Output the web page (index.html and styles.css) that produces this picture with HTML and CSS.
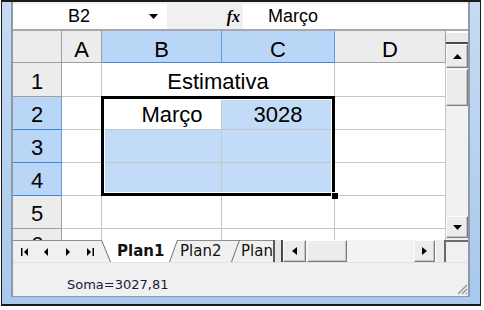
FILE: index.html
```html
<!DOCTYPE html>
<html lang="pt">

<head>
    <meta charset="UTF-8">
    <title>Planilha - Estimativa</title>
    <link rel="stylesheet" href="styles.css">
</head>

<body>
    <div class="window">
        <div class="inner">
            <!-- Formula bar -->
            <div class="formula-bar">
                <div class="name-box">
                    <span class="name-text">B2</span>
                    <svg class="drop" width="9" height="5" viewBox="0 0 9 5"><path d="M0 0H9L4.5 5Z" /></svg>
                </div>
                <div class="fx-area"><span class="fx">fx</span></div>
                <div class="formula-input">Março</div>
            </div>

            <!-- Sheet + vertical scrollbar -->
            <div class="sheet-area">
                <div class="sheet">
                    <div class="grid">
                        <div class="hdr corner"></div>
                        <div class="hdr col">A</div>
                        <div class="hdr col sel">B</div>
                        <div class="hdr col sel">C</div>
                        <div class="hdr col">D</div>

                        <div class="hdr row">1</div>
                        <div class="cell"></div>
                        <div class="cell merged">Estimativa</div>
                        <div class="cell"></div>

                        <div class="hdr row sel">2</div>
                        <div class="cell"></div>
                        <div class="cell active">Março</div>
                        <div class="cell sel">3028</div>
                        <div class="cell"></div>

                        <div class="hdr row sel">3</div>
                        <div class="cell"></div>
                        <div class="cell sel"></div>
                        <div class="cell sel"></div>
                        <div class="cell"></div>

                        <div class="hdr row sel">4</div>
                        <div class="cell"></div>
                        <div class="cell sel"></div>
                        <div class="cell sel"></div>
                        <div class="cell"></div>

                        <div class="hdr row">5</div>
                        <div class="cell"></div>
                        <div class="cell"></div>
                        <div class="cell"></div>
                        <div class="cell"></div>

                        <div class="hdr row part">6</div>
                        <div class="cell part"></div>
                        <div class="cell part"></div>
                        <div class="cell part"></div>
                        <div class="cell part"></div>
                    </div>
                    <div class="selection"><span class="fill-handle"></span></div>
                </div>

                <div class="vscroll">
                    <div class="vs-split"></div>
                    <div class="btn vs-up">
                        <svg width="9" height="5" viewBox="0 0 9 5"><path d="M0 5H9L4.5 0Z" /></svg>
                    </div>
                    <div class="btn vs-thumb"></div>
                    <div class="vs-track"></div>
                    <div class="btn vs-down">
                        <svg width="9" height="5" viewBox="0 0 9 5"><path d="M0 0H9L4.5 5Z" /></svg>
                    </div>
                </div>
            </div>

            <!-- Sheet tabs + horizontal scrollbar -->
            <div class="tab-bar">
                <div class="tab-nav">
                    <span class="nav-btn">
                        <svg width="7" height="8" viewBox="0 0 7 8"><path d="M0 0H1.5V8H0Z M7 0V8L3 4Z" /></svg>
                    </span>
                    <span class="nav-btn">
                        <svg width="4" height="8" viewBox="0 0 4 8"><path d="M4 0V8L0 4Z" /></svg>
                    </span>
                    <span class="nav-btn">
                        <svg width="4" height="8" viewBox="0 0 4 8"><path d="M0 0V8L4 4Z" /></svg>
                    </span>
                    <span class="nav-btn">
                        <svg width="7" height="8" viewBox="0 0 7 8"><path d="M0 0V8L4 4Z M5.5 0H7V8H5.5Z" /></svg>
                    </span>
                </div>
                <svg class="slant" width="10" height="22" viewBox="0 0 10 22">
                    <path d="M0 0H10V22Z" fill="#fff" />
                    <path d="M0.5 0L9.5 22" stroke="#6f6f6f" fill="none" />
                </svg>
                <div class="tab active">Plan1</div>
                <svg class="slant" width="9" height="22" viewBox="0 0 9 22">
                    <path d="M0 0H9L0 22Z" fill="#fff" />
                    <path d="M8.5 0L0.5 22" stroke="#6f6f6f" fill="none" />
                </svg>
                <div class="tab">Plan2</div>
                <svg class="slant" width="9" height="22" viewBox="0 0 9 22">
                    <path d="M0 0.5H9" stroke="#8e8e8e" fill="none" />
                    <path d="M8.5 0L0.5 22" stroke="#6f6f6f" fill="none" />
                </svg>
                <div class="tab last">Plan</div>
                <div class="tab-split"></div>
                <div class="btn hs-left">
                    <svg width="5" height="8" viewBox="0 0 5 8"><path d="M5 0V8L0 4Z" /></svg>
                </div>
                <div class="btn hs-thumb"></div>
                <div class="hs-track"></div>
                <div class="btn hs-right">
                    <svg width="5" height="8" viewBox="0 0 5 8"><path d="M0 0V8L5 4Z" /></svg>
                </div>
                <div class="hs-split"></div>
                <div class="corner-box"></div>
            </div>

            <!-- Status bar -->
            <div class="status-bar">
                <span class="status-text">Soma=3027,81</span>
                <svg class="grip" width="13" height="13" viewBox="0 0 13 13">
                    <path d="M12 3L3 12 M12 7L7 12 M12 11L11 12" stroke="#9a9a9a" stroke-width="1.5" fill="none" />
                </svg>
            </div>
        </div>
    </div>
</body>

</html>
```

FILE: styles.css
```css
* {
    box-sizing: border-box;
}

body {
    margin: 0;
    background: #fff;
    font-family: "Liberation Sans", Arial, sans-serif;
}

.window {
    width: 480px;
    height: 306px;
    margin-left: 1px;
    border: 1px solid #1a1a1a;
    border-top-width: 2px;
    border-bottom-width: 2px;
    background: linear-gradient(#c6dbf1, #a9c8ec);
    padding: 0 10px 7px 9px;
}

.inner {
    height: 100%;
    border: 2px solid #8a99ab;
    border-top: 0;
    border-bottom-width: 1px;
    background: #f0f0f0;
    display: flex;
    flex-direction: column;
}

/* formula bar */
.formula-bar {
    display: flex;
    height: 29px;
    padding-top: 2px;
    border-bottom: 2px solid #a8a8a8;
    background: #f0f0f0;
    font-size: 18px;
    line-height: 25px;
    color: #000;
}

.name-box {
    width: 154px;
    background: #fff;
    display: flex;
    align-items: center;
}

.name-text {
    width: 132px;
    text-align: center;
}

.drop {
    margin-left: 4px;
}

.fx-area {
    width: 76px;
    display: flex;
    justify-content: flex-end;
    padding-right: 3px;
}

.fx {
    font-family: "Liberation Serif", serif;
    font-style: italic;
    font-weight: bold;
    font-size: 16px;
}

.formula-input {
    flex: 1;
    background: #fff;
    padding-left: 25px;
}

/* sheet */
.sheet-area {
    display: flex;
    height: 209px;
}

.sheet {
    position: relative;
    width: 433px;
    background: #fff;
    overflow: hidden;
}

.grid {
    display: grid;
    grid-template-columns: 49px 40px 120px 113px 111px;
    grid-template-rows: 32px 34px 33px 33px 33px 33px 11px;
    font-size: 22px;
    line-height: 25px;
    color: #000;
}

.hdr,
.cell {
    display: flex;
    align-items: flex-end;
    justify-content: center;
    border-right: 1px solid #c6c6c6;
    border-bottom: 1px solid #c6c6c6;
    padding-bottom: 2px;
}

.hdr {
    background: #ececec;
    border-color: #9f9f9f;
}

.hdr.col {
    padding-bottom: 0;
}

.hdr.sel {
    background: #bad6f6;
    border-right-color: #5f9de6;
    border-bottom-color: #3a88e0;
}

.cell.merged {
    grid-column: span 2;
}

.cell.sel {
    background: #c2dbf6;
}

.cell.active {
    padding-left: 21px;
}

.part {
    align-items: flex-start;
    padding: 3px 0 0;
    border-bottom: 0;
    overflow: hidden;
}

.selection {
    position: absolute;
    left: 88px;
    top: 65px;
    width: 234px;
    height: 100px;
    border: 3px solid #000;
    box-shadow: inset 0 0 0 1px #fff;
}

.fill-handle {
    position: absolute;
    right: -6px;
    bottom: -6px;
    width: 7px;
    height: 7px;
    background: #000;
    border: 1px solid #fff;
    border-width: 1px 0 0 1px;
}

/* buttons */
.btn {
    display: flex;
    align-items: center;
    justify-content: center;
    background: #ececec;
    border: 1px solid;
    border-color: #fdfdfd #7c7c7c #7c7c7c #fdfdfd;
    box-shadow: inset -1px -1px 0 #c4c4c4;
}

/* vertical scrollbar */
.vscroll {
    width: 22px;
    display: flex;
    flex-direction: column;
    background: #f1f1f1;
    padding-bottom: 2px;
}

.vs-split {
    height: 13px;
    border-top: 2px solid #fff;
    border-bottom: 2px solid #4a4a4a;
    background: #e9e9e9;
}

.vs-up {
    height: 24px;
}

.vs-thumb {
    height: 37px;
    margin-top: 1px;
}

.vs-track {
    flex: 1;
}

.vs-down {
    height: 22px;
}

/* tab bar */
.tab-bar {
    display: flex;
    height: 22px;
    font-family: "DejaVu Sans", sans-serif;
    font-size: 15px;
    line-height: 21px;
    color: #111;
    background: #f0f0f0;
}

.tab-nav {
    width: 88px;
    display: flex;
    border-top: 1px solid #8e8e8e;
}

.nav-btn {
    width: 22px;
    display: flex;
    align-items: center;
    justify-content: center;
}

.slant {
    flex: none;
    display: block;
}

.tab {
    width: 53px;
    padding-left: 2px;
    border-top: 1px solid #8e8e8e;
    white-space: nowrap;
    overflow: hidden;
}

.tab.active {
    width: 58px;
    padding-left: 6px;
    font-weight: bold;
    background: #fff;
    border-top: 0;
    line-height: 22px;
}

.tab.last {
    width: 33px;
    padding-left: 1px;
}

.tab-split {
    width: 10px;
    background: #e6e6e6;
    border-left: 2px solid #5a5a5a;
    border-right: 2px solid #4a4a4a;
}

.hs-left {
    width: 23px;
}

.hs-thumb {
    width: 40px;
    margin-left: 1px;
}

.hs-track {
    width: 67px;
    background: #f3f3f3;
}

.hs-right {
    width: 21px;
}

.hs-split {
    width: 11px;
    background: #ececec;
    border-left: 1px solid #fff;
    border-right: 2px solid #6a6a6a;
}

.corner-box {
    width: 22px;
    background: #f0f0f0;
    border-top: 2px solid #6d6d6d;
}

/* status bar */
.status-bar {
    height: 34px;
    display: flex;
    align-items: center;
    padding-left: 54px;
    border-top: 1px solid #e2e2e2;
    background: #f0f0f0;
    font-family: "DejaVu Sans", sans-serif;
    font-size: 13px;
    color: #1a1a3a;
}

.status-text {
    padding-top: 10px;
}

.grip {
    margin-left: auto;
    align-self: flex-end;
    margin-bottom: 1px;
}
```
